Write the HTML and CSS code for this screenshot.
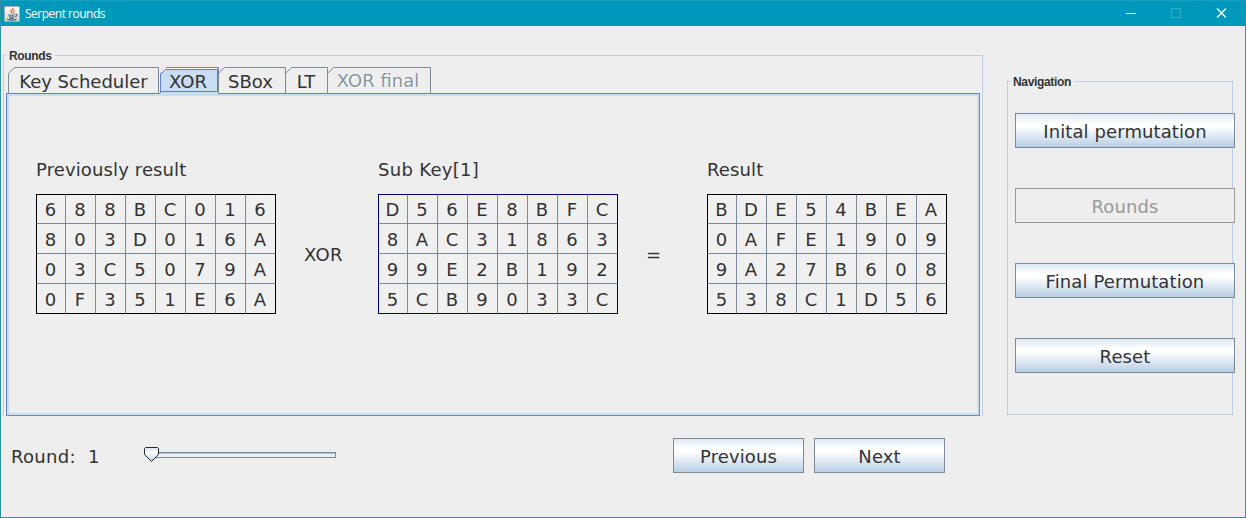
FILE: index.html
```html
<!DOCTYPE html>
<html lang="en">
<head>
<meta charset="utf-8">
<title>Serpent rounds</title>
<link rel="stylesheet" href="styles.css">
</head>
<body>
<div class="window">
  <header class="titlebar">
    <svg class="app-icon" width="16" height="16" viewBox="0 0 16 16">
      <defs><linearGradient id="tile" x1="0" y1="0" x2="0" y2="1"><stop offset="0" stop-color="#fff"/><stop offset="1" stop-color="#ccd2d8"/></linearGradient></defs>
      <rect x=".5" y=".5" width="15" height="15" rx="1" fill="url(#tile)" stroke="#a9a9a9"/>
      <path d="M9 1.800c.7 1.500-2.500 2.200-2.200 3.700.2.900 1.100 1.300.9 2.200M10.600 4c-1.500.8-1.900 1.300-1.100 2.200.4.600.1 1.100-.4 1.500" fill="none" stroke="#e87a2c" stroke-width="1.300"/>
      <path d="M4.200 8.700c1.800.7 4.700.6 6.500 0M5 10.400c1.700.7 3.800.6 5.200 0M5.500 12c1.400.6 3 .5 4.100 0M11.300 8.500c2.400-.6 2.200 1.700-.4 2.500M3 13.200c2 1.200 7.500 1.100 9.500.1" fill="none" stroke="#47688a" stroke-width="1.100"/>
    </svg>
    <span class="title">Serpent rounds</span>
    <svg class="controls" width="120" height="26" viewBox="0 0 120 26" shape-rendering="crispEdges" fill="none">
      <path d="M10 13.500h10" stroke="#fff"/>
      <rect x="55.500" y="8.500" width="9" height="9" stroke="#35a9c9"/>
      <path d="M101 8.500l9 9M110 8.500l-9 9" stroke="#fff" stroke-width="1.400" shape-rendering="auto"/>
    </svg>
  </header>

  <main class="content">
    <div class="left">
      <section class="group rounds">
        <h2 class="legend">Rounds</h2>
        <nav class="tabs">
          <div class="tab key"><svg class="edge" width="151" height="27"><path d="M.5 27V6.500L6.500.5H150.500V27"/></svg>Key Scheduler</div>
          <div class="tab xor"><svg class="edge" width="59" height="27"><path class="fill" d="M0 29V6.500L6.500 0H59V29z"/><path class="rim" d="M.5 26V6.500L6.500.5H58.500V26"/><path class="gap" d="M1.500 5.500L5.500 1.500H57"/><path class="focus" d="M.5 24.500V7.500L5.500 2.500H57.500V24.500z"/></svg>XOR</div>
          <div class="tab sbox"><svg class="edge" width="68" height="27"><path d="M.5 27V6.500L6.500.5H67.500V27"/></svg>SBox</div>
          <div class="tab lt"><svg class="edge" width="43" height="27"><path d="M.5 27V6.500L6.500.5H42.500V27"/></svg>LT</div>
          <div class="tab final"><svg class="edge" width="104" height="27"><path d="M.5 27V6.500L6.500.5H103.500V27"/></svg>XOR final</div>
        </nav>
        <div class="pane">
          <div class="block">
            <div class="label">Previously result</div>
            <div class="matrix" data-rows="688BC016 803D016A 03C5079A 0F351E6A"></div>
          </div>
          <div class="op op-xor">XOR</div>
          <div class="block">
            <div class="label subkey-label">Sub Key[1]</div>
            <div class="matrix subkey" data-rows="D56E8BFC 8AC31863 99E2B192 5CB9033C"></div>
          </div>
          <div class="op op-eq">=</div>
          <div class="block">
            <div class="label">Result</div>
            <div class="matrix" data-rows="BDE54BEA 0AFE1909 9A27B608 538C1D56"></div>
          </div>
        </div>
      </section>
      <footer class="bottom">
        <span class="round-label">Round:</span><span class="round-value">1</span>
        <svg class="slider" width="194" height="18" viewBox="0 0 194 18">
          <defs><linearGradient id="thumb" x1="0" y1="0" x2="0" y2="1"><stop offset="0" stop-color="#cfe0f3"/><stop offset=".35" stop-color="#fff"/><stop offset="1" stop-color="#b8cfe5"/></linearGradient></defs>
          <rect x="8.500" y="6.500" width="183" height="5" fill="#eee" stroke="#7a8a99"/>
          <path d="M9 7.500h182" stroke="#a9c0d6"/>
          <path d="M1.500 1.500h12l1 1v6l-7 7-7-7v-6z" fill="url(#thumb)" stroke="#222b33"/>
        </svg>
        <button class="btn step">Previous</button>
        <button class="btn step">Next</button>
      </footer>
    </div>
    <aside class="group navigation">
      <h2 class="legend">Navigation</h2>
      <button class="btn">Inital permutation</button>
      <button class="btn" disabled>Rounds</button>
      <button class="btn">Final Permutation</button>
      <button class="btn">Reset</button>
    </aside>
  </main>
</div>
<script src="script.js"></script>
</body>
</html>
```

FILE: styles.css
```css
* { box-sizing: border-box; }
body { margin: 0; font: 18px/22px "DejaVu Sans", Verdana, sans-serif; color: #333; }
.window { width: 1246px; height: 518px; background: #eee; border: 1px solid #2b93a5; border-top: 0; overflow: hidden; }
.titlebar { height: 26px; margin: 0 -1px; padding-left: 4px; display: flex; align-items: center; background: #0099bc; border-top: 1px solid #1a9fc0; }
.title { margin-left: 5px; font: 12px/16px "Open Sans", "Noto Sans", sans-serif; letter-spacing: -.5px; color: #fff; }
.controls { margin: -1px 10px 0 auto; }
.content { display: flex; align-items: flex-start; }
.left { width: 980px; margin: 29px 0 0 2px; }
.group { border: 1px solid #b8cfe5; }
.legend { width: max-content; margin: -7px 0 0 2px; padding: 0 3px; background: #eee; font: bold 12px/14px "Liberation Sans", Arial, sans-serif; letter-spacing: -.33px; }
.rounds { height: 361px; border-bottom: 0; }
.tabs { display: flex; height: 27px; margin: 4px 0 0 4px; position: relative; z-index: 1; }
.tab { position: relative; isolation: isolate; height: 27px; line-height: 29px; text-align: center; margin-right: -1px; }
.edge { position: absolute; left: 0; top: 0; z-index: -1; overflow: visible; fill: none; stroke: #7a8a99; }
.edge .fill { fill: #c8ddf2; stroke: none; }
.edge .rim { stroke: #6382bf; }
.edge .gap { stroke: #fff; }
.edge .focus { fill: #c8ddf2; stroke: #6382bf; }
.key { width: 151px; }
.xor { width: 59px; margin-left: 2px; padding-right: 3px; }
.sbox { width: 68px; padding-right: 3px; }
.lt { width: 43px; padding-right: 1px; }
.final { width: 104px; padding-right: 2px; line-height: 27px; color: #8796a5; text-shadow: 1px 1px #fff; }
.pane { width: 974px; height: 323px; margin: -1px 0 0 2px; border: 1px solid #7a8a99; border-left-color: #6382bf; border-top-color: #6382bf; box-shadow: inset 0 0 0 2px #c8ddf2; padding: 65px 0 0 29px; display: flex; }
.label { height: 35px; white-space: nowrap; letter-spacing: .12px; }
.subkey-label { letter-spacing: .3px; }
.block { width: 240px; }
.matrix { display: grid; grid-template-columns: 29px repeat(6, 30px) 29px; grid-template-rows: 29px 30px 30px 29px; height: 120px; border: 1px solid #000; background: #f0f0f0; }
.subkey { border-color: #000080; }
.cell { border-right: 1px solid #7a8a99; border-bottom: 1px solid #7a8a99; line-height: 31px; padding-right: 1px; text-align: center; }
.cell:nth-child(-n+8) { line-height: 29px; }
.cell:nth-child(8n) { border-right: 0; }
.cell:nth-child(n+25) { border-bottom: 0; }
.op { width: 102px; padding-top: 85px; }
.op-xor { padding-left: 28px; letter-spacing: .3px; }
.op-eq { width: 89px; padding-left: 28px; }
.bottom { display: flex; margin-top: 22px; align-items: flex-start; }
.round-label { width: 77px; padding: 8px 0 0 8px; letter-spacing: .3px; }
.round-value { width: 64px; padding: 8px 0 0 8px; }
.slider { margin: 8px 335px 0 0; }
.btn { display: block; font: inherit; letter-spacing: .1px; color: #333; width: 220px; height: 35px; padding: 2px 0 0; border: 1px solid #7a8a99; background: linear-gradient(#dde8f3 0%, #fff 30%, #fff 38%, #b8cfe5 100%); }
.btn:disabled { color: #999; background: #eee; border-color: #999; }
.step { width: 131px; margin-right: 10px; }
.navigation { width: 226px; height: 334px; margin: 55px 0 0 24px; }
.navigation .btn { margin: 0 0 40px 7px; }
.navigation .legend { margin-bottom: 24px; }
```

FILE: script.js
```js
document.querySelectorAll('.matrix').forEach(function (matrix) {
  Array.from(matrix.dataset.rows.replace(/ /g, '')).forEach(function (digit) {
    var cell = document.createElement('span');
    cell.className = 'cell';
    cell.textContent = digit;
    matrix.appendChild(cell);
  });
});
```
